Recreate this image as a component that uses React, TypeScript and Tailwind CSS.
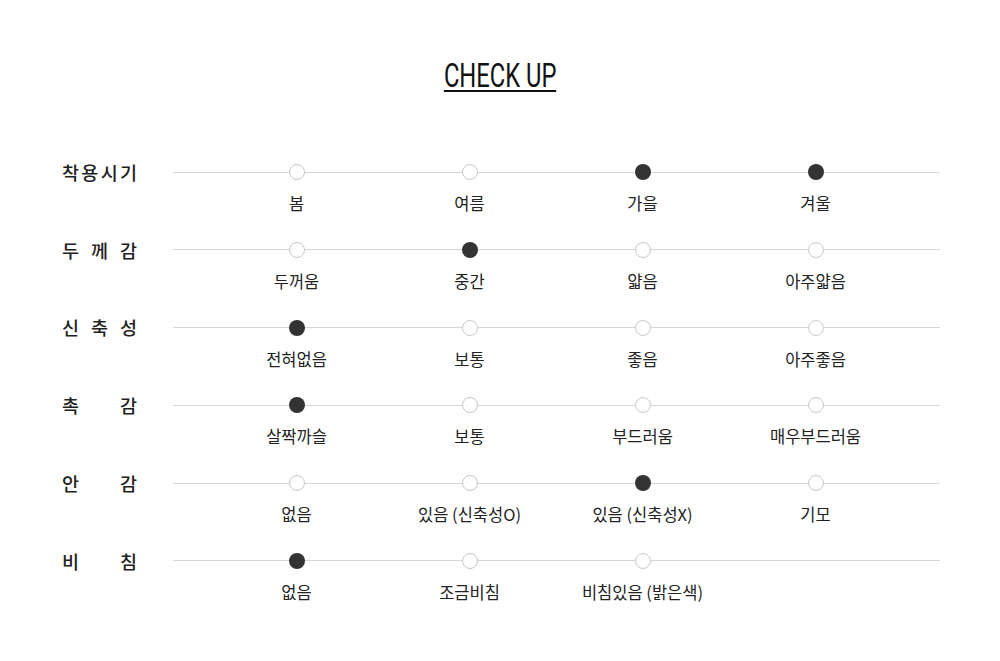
import React from "react";

type Row = { label: string; items: string[]; on: number[] };

const rows: Row[] = [
  { label: "착용시기", items: ["봄", "여름", "가을", "겨울"], on: [2, 3] },
  { label: "두께감", items: ["두꺼움", "중간", "얇음", "아주얇음"], on: [1] },
  { label: "신축성", items: ["전혀없음", "보통", "좋음", "아주좋음"], on: [0] },
  { label: "촉감", items: ["살짝까슬", "보통", "부드러움", "매우부드러움"], on: [0] },
  { label: "안감", items: ["없음", "있음 (신축성O)", "있음 (신축성X)", "기모"], on: [2] },
  { label: "비침", items: ["없음", "조금비침", "비침있음 (밝은색)"], on: [0] },
];

export default function App() {
  return (
    <div
      className="w-[1000px] h-[661px] bg-white text-[#222]"
      style={{ fontFamily: '"Noto Sans CJK KR", "Noto Sans", sans-serif' }}
    >
      <div className="flex justify-center pt-[59px]">
        <div
          className="inline-block origin-center scale-x-[0.72] h-[33px] border-b-2 border-[#111] text-[33px] leading-none text-[#111] whitespace-nowrap"
          style={{ fontFamily: 'Roboto, "Liberation Sans", sans-serif' }}
        >
          CHECK UP
        </div>
      </div>
      <div className="mt-[72px] flex flex-col">
        {rows.map((r) => (
          <div key={r.label} className="flex h-[77.8px] pl-[62px]">
            <div className="w-[75px] h-4 flex items-center justify-between text-[18.5px] font-medium text-[#222] leading-none">
              {r.label.split("").map((c, i) => (
                <span key={i}>{c}</span>
              ))}
            </div>
            <div className="relative ml-[36px] w-[767px]">
              <div className="absolute left-0 right-0 top-[7.5px] h-px bg-[#d6d6d6]" />
              <div className="relative grid grid-cols-[repeat(4,173px)] pl-[37px]">
                {r.items.map((it, i) => (
                  <div key={i} className="flex flex-col items-center">
                    <div
                      className={
                        r.on.includes(i)
                          ? "w-4 h-4 rounded-full bg-[#333]"
                          : "w-4 h-4 rounded-full bg-white border border-[#c8c8c8]"
                      }
                    />
                    <div className="mt-[12px] text-[16.5px] leading-[22px] text-[#222] whitespace-nowrap">
                      {it}
                    </div>
                  </div>
                ))}
              </div>
            </div>
          </div>
        ))}
      </div>
    </div>
  );
}
